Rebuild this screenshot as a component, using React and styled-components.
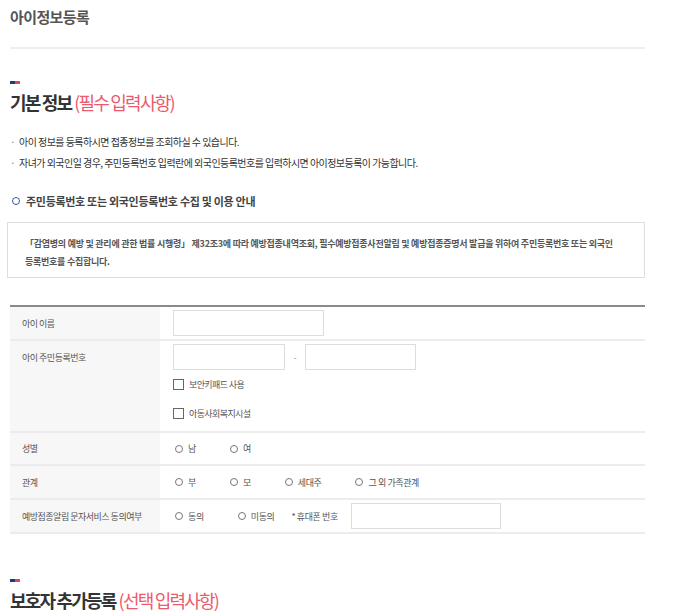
import { createGlobalStyle, styled } from 'styled-components';

const GlobalStyle = createGlobalStyle`
    body {
        margin: 0;
        background: #fff;
        font-family: "Noto Sans CJK KR", "Noto Sans", sans-serif;
        color: #444;
    }
`;

const Page = styled.div`
    width: 635px;
    padding: 4px 0 0 10px;
`;
const PageTitle = styled.h1`
    margin: 0;
    height: 26px;
    font-size: 15px;
    line-height: 26px;
    font-weight: 700;
    color: #555;
    letter-spacing: -0.6px;
`;
const Rule = styled.hr`
    margin: 17px 0 0 0;
    border: none;
    border-top: 2px solid #eee;
`;
const Section = styled.section`
    padding-top: ${p => p.$top}px;
`;
const Marker = styled.div`
    width: 10px;
    height: 3px;
    background: linear-gradient(to right, #1f3c74 50%, #e2465a 50%);
`;
const Heading = styled.h2`
    margin: 6px 0 0 0;
    font-size: 18px;
    line-height: 24px;
    font-weight: 700;
    color: #333;
    letter-spacing: -1.8px;
    span {
        font-weight: 400;
        color: #ec5a6e;
        margin-left: 3px;
    }
`;
const Notes = styled.ul`
    list-style: none;
    margin: 20px 0 0 0;
    padding: 0;
    display: flex;
    flex-direction: column;
    gap: 5px;
`;
const Note = styled.li`
    font-size: 10px;
    line-height: 16px;
    color: #333;
    letter-spacing: -0.55px;
    &::before {
        content: "·";
        margin-right: 4px;
        color: #888;
    }
`;
const SubHeading = styled.h3`
    margin: 21px 0 0 0;
    display: flex;
    align-items: center;
    gap: 6px;
    font-size: 11px;
    line-height: 18px;
    font-weight: 700;
    color: #444;
    letter-spacing: -0.3px;
    padding-left: 2px;
    &::before {
        content: "";
        width: 6px;
        height: 6px;
        border: 1.5px solid #3a5aa6;
        border-radius: 50%;
    }
`;
const InfoBox = styled.div`
    margin: 12px 0 0 -3px;
    border: 1px solid #dedede;
    padding: 12px 20px 6px 17px;
    font-size: 9px;
    line-height: 18px;
    font-weight: 700;
    color: #555;
    letter-spacing: -0.25px;
`;
const Table = styled.div`
    margin-top: 27px;
    border-top: 2px solid #8a8a8a;
`;
const Row = styled.div`
    display: grid;
    grid-template-columns: 150px 1fr;
    border-bottom: 2px solid #ececec;
    min-height: ${p => p.$h}px;
`;
const Label = styled.div`
    background: #f7f7f7;
    padding: ${p => (p.$top ? '10px 12px 0' : '0 12px')};
    display: flex;
    align-items: ${p => (p.$top ? 'flex-start' : 'center')};
    font-size: 9px;
    color: #555;
    letter-spacing: -0.5px;
`;
const Cell = styled.div`
    padding: ${p => p.$pad || '0 13px'};
    display: flex;
    flex-direction: ${p => (p.$column ? 'column' : 'row')};
    align-items: ${p => (p.$column ? 'flex-start' : 'center')};
`;
const Line = styled.div`
    display: flex;
    align-items: center;
`;
const TextInput = styled.input`
    box-sizing: border-box;
    width: ${p => p.$w}px;
    height: 26px;
    border: 1px solid #ddd;
    margin: 0;
    padding: 0 6px;
    font: inherit;
    background: #fff;
`;
const Dash = styled.span`
    width: 20px;
    text-align: center;
    font-size: 9px;
    color: #999;
`;
const Check = styled.label`
    display: flex;
    align-items: center;
    gap: 5px;
    font-size: 9px;
    color: #555;
    letter-spacing: -0.6px;
    margin-top: ${p => p.$top}px;
    &::before {
        content: "";
        box-sizing: border-box;
        width: 11px;
        height: 11px;
        border: 1px solid #666;
    }
`;
const Radios = styled.div`
    display: flex;
    align-items: center;
    margin-left: 2px;
    gap: 34px;
`;
const Radio = styled.label`
    display: flex;
    align-items: center;
    gap: 5px;
    font-size: 9px;
    color: #555;
    letter-spacing: -0.4px;
    &::before {
        content: "";
        box-sizing: border-box;
        width: 8px;
        height: 8px;
        border: 1px solid #777;
        border-radius: 50%;
    }
`;
const PhoneLabel = styled.span`
    margin-left: 17px;
    font-size: 9px;
    color: #555;
    letter-spacing: -0.4px;
    width: 60px;
`;

export default function App() {
    return (
        <Page>
            <GlobalStyle />
            <PageTitle>아이정보등록</PageTitle>
            <Rule />
            <Section $top={32}>
                <Marker />
                <Heading>기본 정보<span>(필수 입력사항)</span></Heading>
                <Notes>
                    <Note>아이 정보를 등록하시면 접종정보를 조회하실 수 있습니다.</Note>
                    <Note>자녀가 외국인일 경우, 주민등록번호 입력란에 외국인등록번호를 입력하시면 아이정보등록이 가능합니다.</Note>
                </Notes>
                <SubHeading>주민등록번호 또는 외국인등록번호 수집 및 이용 안내</SubHeading>
                <InfoBox>
                    「감염병의 예방 및 관리에 관한 법률 시행령」 제32조3에 따라 예방접종내역조회, 필수예방접종사전알림 및 예방접종증명서 발급을 위하여 주민등록번호 또는 외국인<br />
                    등록번호를 수집합니다.
                </InfoBox>
                <Table>
                    <Row $h={32}>
                        <Label>아이 이름</Label>
                        <Cell><TextInput $w={151} /></Cell>
                    </Row>
                    <Row $h={87}>
                        <Label $top>아이 주민등록번호</Label>
                        <Cell $column $pad="3px 13px 11px">
                            <Line>
                                <TextInput $w={112} />
                                <Dash>-</Dash>
                                <TextInput $w={111} />
                            </Line>
                            <Check $top={8}>보안키패드 사용</Check>
                            <Check $top={16}>아동사회복지시설</Check>
                        </Cell>
                    </Row>
                    <Row $h={31}>
                        <Label>성별</Label>
                        <Cell>
                            <Radios>
                                <Radio>남</Radio>
                                <Radio>여</Radio>
                            </Radios>
                        </Cell>
                    </Row>
                    <Row $h={32}>
                        <Label>관계</Label>
                        <Cell>
                            <Radios>
                                <Radio>부</Radio>
                                <Radio>모</Radio>
                                <Radio>세대주</Radio>
                                <Radio>그 외 가족관계</Radio>
                            </Radios>
                        </Cell>
                    </Row>
                    <Row $h={32}>
                        <Label>예방접종알림 문자서비스 동의여부</Label>
                        <Cell>
                            <Radios>
                                <Radio>동의</Radio>
                                <Radio>미동의</Radio>
                            </Radios>
                            <PhoneLabel>* 휴대폰 번호</PhoneLabel>
                            <TextInput $w={150} />
                        </Cell>
                    </Row>
                </Table>
            </Section>
            <Section $top={45}>
                <Marker />
                <Heading>보호자 추가등록<span>(선택 입력사항)</span></Heading>
            </Section>
        </Page>
    );
}
